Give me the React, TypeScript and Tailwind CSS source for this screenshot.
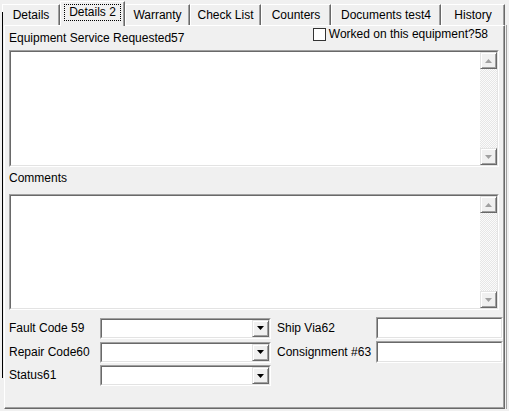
import React from 'react';

const font = "font-['Liberation_Sans',Arial,sans-serif] text-[12px] text-black";

const tabs = [
  { label: 'Details', w: 'w-[58px]' },
  { label: 'Details 2', w: 'w-[65px]', active: true },
  { label: 'Warranty', w: 'w-[65px]' },
  { label: 'Check List', w: 'w-[71px]' },
  { label: 'Counters', w: 'w-[70px]' },
  { label: 'Documents test4', w: 'w-[110px]' },
  { label: 'History', w: 'w-[64px]' },
];

function Sunken({ className, children }: { className?: string; children?: React.ReactNode }) {
  return (
    <div
      className={`border border-t-[#a0a0a0] border-l-[#a0a0a0] border-b-white border-r-white ${className ?? ''}`}
    >
      <div className="h-full w-full border border-t-[#696969] border-l-[#696969] border-b-[#e3e3e3] border-r-[#e3e3e3] bg-white flex">
        {children}
      </div>
    </div>
  );
}

function Arrow({ dir, color }: { dir: 'up' | 'down'; color: string }) {
  return (
    <svg width="7" height="4" viewBox="0 0 7 4">
      {dir === 'up' ? <polygon points="3.5,0 7,4 0,4" fill={color} /> : <polygon points="0,0 7,0 3.5,4" fill={color} />}
    </svg>
  );
}

function RaisedButton({ children, className }: { children: React.ReactNode; className?: string }) {
  return (
    <div
      className={`flex items-center justify-center bg-[#f0f0f0] border border-t-[#e3e3e3] border-l-[#e3e3e3] border-b-[#696969] border-r-[#696969] shadow-[inset_1px_1px_0_#fff,inset_-1px_-1px_0_#a0a0a0] ${className ?? ''}`}
    >
      {children}
    </div>
  );
}

function Memo({ height }: { height: string }) {
  return (
    <Sunken className={`w-[490px] ${height}`}>
      <div className="flex-1" />
      <div className="w-[17px] flex flex-col bg-[repeating-conic-gradient(#e6e6e6_0_25%,#fbfbfb_0_50%)] bg-[length:2px_2px]">
        <RaisedButton className="h-[17px] w-[17px]">
          <Arrow dir="up" color="#a0a0a0" />
        </RaisedButton>
        <div className="flex-1" />
        <RaisedButton className="h-[17px] w-[17px]">
          <Arrow dir="down" color="#a0a0a0" />
        </RaisedButton>
      </div>
    </Sunken>
  );
}

function Combo() {
  return (
    <Sunken className="w-[171px] h-[21px]">
      <div className="flex-1" />
      <RaisedButton className="w-[17px] h-full">
        <Arrow dir="down" color="#000" />
      </RaisedButton>
    </Sunken>
  );
}

export default function App() {
  return (
    <div className={`relative w-[509px] h-[411px] overflow-hidden bg-[#f0f0f0] ${font}`}>
      {/* tab strip */}
      <div className="flex items-end h-[25px] pl-[2px]">
        {tabs.map(t =>
          t.active ? (
            <div
              key={t.label}
              className={`${t.w} h-[25px] -mb-px relative z-10 flex justify-center pt-[2px] bg-[#f0f0f0] border-t border-l border-t-white border-l-white border-r border-r-[#696969] shadow-[inset_-1px_0_0_#a0a0a0]`}
            >
              <span className="h-[17px] leading-[15px] px-[4px] border border-dotted border-black">{t.label}</span>
            </div>
          ) : (
            <div
              key={t.label}
              className={`${t.w} h-[21px] flex items-center justify-center border-t border-l border-t-white border-l-white border-r border-r-[#696969] shadow-[inset_-1px_0_0_#a0a0a0]`}
            >
              {t.label}
            </div>
          )
        )}
      </div>

      {/* page */}
      <div className="ml-[4px] w-[501px] h-[384px] flex flex-col pl-[4px] border-t border-l border-t-white border-l-white border-r border-b border-r-[#696969] border-b-[#696969] shadow-[inset_-1px_-1px_0_#a0a0a0]">
        <div className="flex h-[24px]">
          <span className="leading-[15px] pt-[5px]">Equipment Service Requested57</span>
          <label className="ml-auto mr-[16px] mt-[2px] h-[13px] flex items-center gap-[3px] leading-[13px]">
            <span className="w-[13px] h-[13px] border border-[#333] bg-white" />
            Worked on this equipment?58
          </label>
        </div>
        <Memo height="h-[117px]" />
        <div className="h-[27px] leading-[15px] pt-[4px]">Comments</div>
        <Memo height="h-[116px]" />

        <div className="mt-[7px] grid grid-cols-[91px_171px_6px_99px_127px] gap-y-[2px] items-center">
          <span className="leading-[15px]">Fault Code 59</span>
          <Combo />
          <span />
          <span className="leading-[15px]">Ship Via62</span>
          <Sunken className="w-[127px] h-[22px]" />

          <span className="leading-[15px]">Repair Code60</span>
          <Combo />
          <span />
          <span className="leading-[15px]">Consignment #63</span>
          <Sunken className="w-[127px] h-[22px]" />

          <span className="leading-[15px]">Status61</span>
          <Combo />
        </div>
      </div>

      {/* window edges */}
      <div className="absolute left-[2px] top-[12px] h-[366px] w-px bg-black" />
      <div className="absolute left-[506px] top-[25px] h-[384px] w-px bg-[#a0a0a0]" />
    </div>
  );
}
